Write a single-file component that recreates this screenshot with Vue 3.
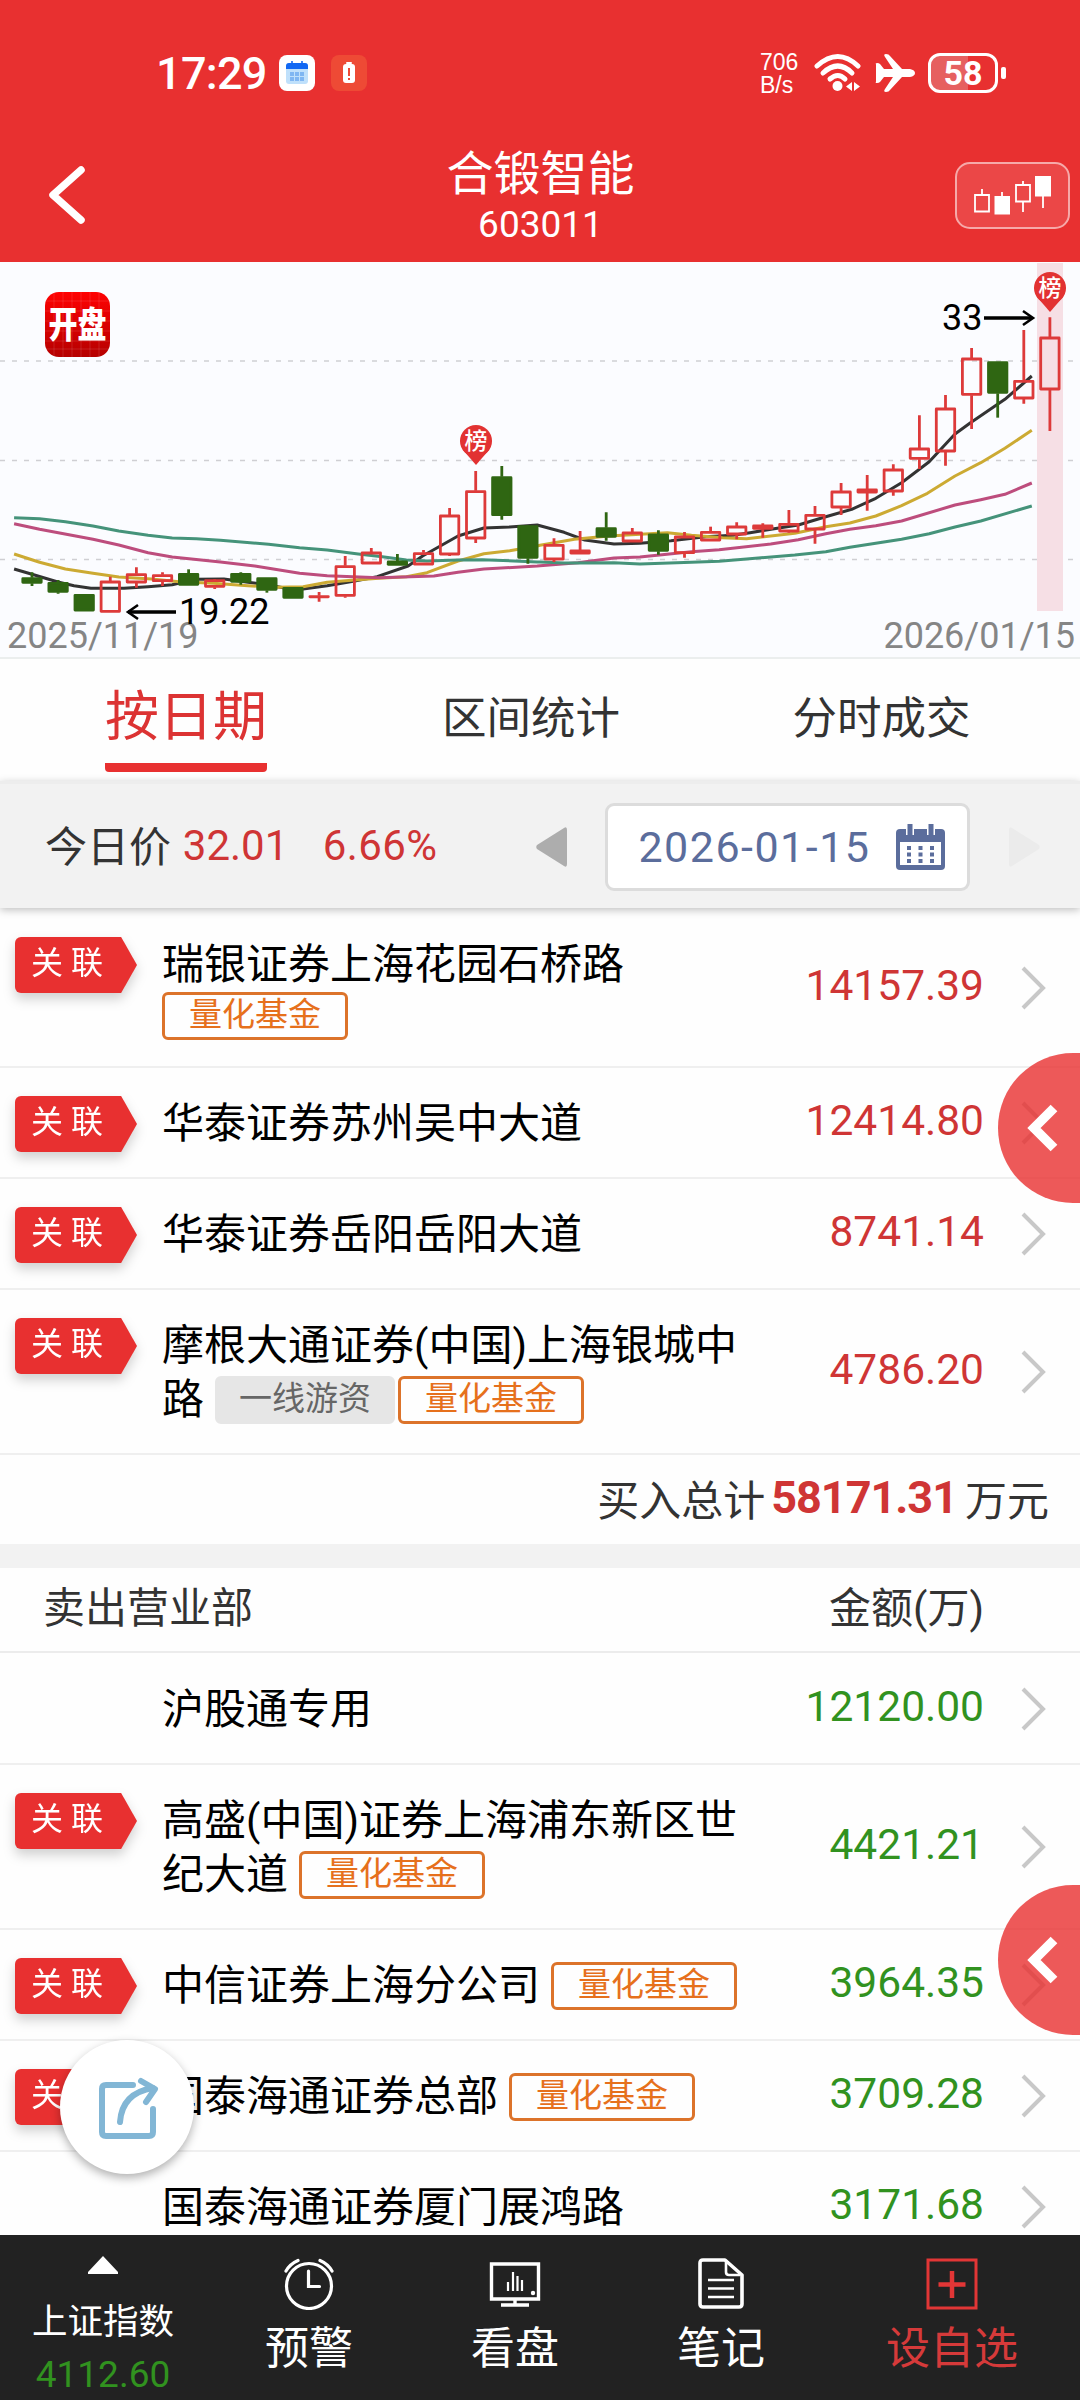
<template>
  <div class="page">
    <header class="header">
      <div class="status-bar">
        <span class="clock">17:29</span>
        <svg class="app-icon" width="36" height="36" viewBox="0 0 36 36">
          <rect width="36" height="36" rx="8" fill="#fff" />
          <rect x="7" y="8" width="22" height="21" rx="3" fill="#bfe0fb" />
          <path d="M7 14v-3a3 3 0 0 1 3-3h16a3 3 0 0 1 3 3v3z" fill="#1268f3" />
          <path d="M13 6v4M23 6v4" stroke="#1268f3" stroke-width="1.6" />
          <path d="M11 17h14v9H11z" fill="#7fb6f2" />
          <path d="M15.5 17v9M20.5 17v9M11 21.5h14" stroke="#bfe0fb" stroke-width="1" />
        </svg>
        <svg class="app-icon" width="36" height="36" viewBox="0 0 36 36">
          <rect width="36" height="36" rx="8" fill="#ee4a35" />
          <rect x="15" y="7" width="6" height="2" rx="1" fill="#fff" />
          <rect x="12" y="9" width="12" height="19" rx="3" fill="#fff" />
          <path d="M18 13v8M18 23v2" stroke="#ee4a35" stroke-width="2" />
        </svg>
        <span class="spacer"></span>
        <span class="speed"><span>706</span><span>B/s</span></span>
        <svg class="wifi" width="48" height="40" viewBox="0 0 48 40">
          <g fill="none" stroke="#fff" stroke-width="5" stroke-linecap="round">
            <path d="M3 13Q24-6 44 13" />
            <path d="M9 20Q24 6 38 20" />
            <path d="M16 26Q24 19 31 26" />
          </g>
          <circle cx="23.5" cy="33" r="5" fill="#fff" />
          <path d="M38 29v9l-6-4.5zM40 29v9l6-4.5z" fill="#fff" />
        </svg>
        <svg class="plane" width="40" height="40" viewBox="0 0 40 40">
          <path d="M1 11.5Q0 10 2 10q2 0 3 1l4 5h9L10 4Q8 1 11 1q3 0 4 2l12 13h8q5 1 5 4t-5 4h-8L15 37q-1 2-4 2-3 0-1-3l8-12H9l-4 5q-1 1-3 1-2 0-1-1.5z" fill="#fff" />
        </svg>
        <div class="battery"><span>58</span></div>
        <i class="battery-nub"></i>
      </div>
      <div class="title-bar">
        <svg class="back" width="42" height="62" viewBox="0 0 42 62">
          <path d="M36 6 8 31l28 25" fill="none" stroke="#fff" stroke-width="7.5" stroke-linecap="round" stroke-linejoin="round" />
        </svg>
        <div class="title">
          <div class="stock-name">合锻智能</div>
          <div class="stock-code">603011</div>
        </div>
        <button class="kline-btn">
          <svg width="78" height="40" viewBox="974 174 78 40">
            <path d="M975 194h14v16.500h-14zM982 188v6M1016 184h14v16.500h-14zM1023 180v4M1023 200v11M1002 191v4M1043 195v12" fill="none" stroke="#fff" stroke-width="1.8" />
            <path d="M994.500 195h15.500v18.500h-15.500zM1035 175h16v20.500h-16z" fill="#fff" />
          </svg>
        </button>
      </div>
    </header>

    <section class="chart">
      <svg width="1080" height="397" viewBox="0 262 1080 397">
        <defs>
          <linearGradient id="logo" x1="0" y1="0" x2="0" y2="1">
            <stop offset="0" stop-color="#ff0202" />
            <stop offset="1" stop-color="#b50000" />
          </linearGradient>
        </defs>
        <path v-for="y in gridLines" :key="y" :d="`M0 ${y}H1080`" stroke="#cfcfd3" stroke-width="1.3" stroke-dasharray="5 7" />
        <rect x="1037" y="263" width="26" height="348" fill="#f6dfe5" />
        <polyline v-for="line in averages" :key="line.color" :points="line.points" :stroke="line.color" fill="none" stroke-width="3" stroke-linejoin="round" />
        <g v-for="(c, i) in candles" :key="i" :stroke="c.color" stroke-width="2.8">
          <path :d="`M${c.x} ${c.high}V${c.top}M${c.x} ${c.bottom}V${c.low}`" />
          <rect :x="c.x - 9.2" :y="c.top + 1" width="18.4" :height="c.height" :fill="c.fill" stroke-linejoin="round" />
        </g>
        <g v-for="pin in pins" :key="pin.x">
          <circle :cx="pin.x" :cy="pin.y" r="16" fill="#e23232" />
          <path :d="`M${pin.x - 13} ${pin.y + 9}L${pin.x} ${pin.y + 24}L${pin.x + 13} ${pin.y + 9}z`" fill="#e23232" />
          <text :x="pin.x" :y="pin.y + 8" class="pin-text">榜</text>
        </g>
        <text x="7" y="648" class="axis-text">2025/11/19</text>
        <text x="1075" y="648" class="axis-text" text-anchor="end">2026/01/15</text>
        <g fill="none" stroke="#000" stroke-width="3.6">
          <path d="M176 612H128M984 318h48" />
          <path d="M138 605l-10 7 10 7M1023 311l10 7-10 7" stroke-width="2.6" />
        </g>
        <text x="179" y="624" class="mark-text">19.22</text>
        <text x="942" y="330" class="mark-text">33</text>
        <rect x="45" y="292" width="65" height="65" rx="14" fill="url(#logo)" />
        <path d="M54 292v65M63 292v65M72 292v65M81 292v65M90 292v65M99 292v65M45 301h65M45 311h65M45 321h65M45 331h65M45 341h65M45 349h65" stroke="#fff" stroke-opacity="0.12" />
        <text transform="translate(77.5 338) scale(1 1.25)" class="logo-text">开盘</text>
      </svg>
    </section>

    <nav class="tabs">
      <div v-for="(tab, i) in tabs" :key="tab" class="tab" :class="{ active: i === activeTab }" @click="activeTab = i">
        <span>{{ tab }}</span>
      </div>
    </nav>

    <section class="date-bar">
      <span class="label">今日价</span>
      <span class="price">32.01</span>
      <span class="change">6.66%</span>
      <svg class="prev" width="31" height="40" viewBox="0 0 31 40"><path d="M31 3v34q0 4-3 2L1 22q-1.500-2 0-4L28 1q3-2 3 2z" fill="#adadad" /></svg>
      <div class="date-box">
        <span>2026-01-15</span>
        <svg width="49" height="46" viewBox="0 0 49 46">
          <path d="M4 5h41q4 0 4 4v33q0 4-4 4H4q-4 0-4-4V9q0-4 4-4z" fill="#5b6d9c" />
          <path d="M4 18h41v23H4z" fill="#fff" />
          <path d="M14 0v11M35 0v11" stroke="#fff" stroke-width="8" />
          <path d="M14 0v11M35 0v11" stroke="#5b6d9c" stroke-width="5" />
          <path d="M11 24h28M11 30.500h28M11 37h28" stroke="#5b6d9c" stroke-width="4" stroke-dasharray="4 7.500" />
        </svg>
      </div>
      <svg class="next" width="31" height="40" viewBox="0 0 31 40"><path d="M0 3v34q0 4 3 2l27-17q1.500-2 0-4L3 1Q0-1 0 3z" fill="#ebebeb" /></svg>
    </section>

    <section class="list buy">
      <div v-for="row in buyRows" :key="row.amount" class="row">
        <div class="link-col"><span v-if="row.linked" class="linked"><b>关 联</b></span></div>
        <div class="name">
          <div v-for="(line, i) in row.lines" :key="i" class="line" :class="{ short: !line.text }">
            <span v-if="line.text" class="text">{{ line.text }}</span>
            <span v-for="tag in line.tags" :key="tag" class="tag" :class="{ gray: tag === '一线游资' }">{{ tag }}</span>
          </div>
        </div>
        <span class="amount">{{ row.amount }}</span>
        <svg class="arrow" width="28" height="46" viewBox="0 0 28 46"><path d="M3 3l20 20L3 43" fill="none" stroke="#c8c8c8" stroke-width="4" /></svg>
      </div>
    </section>

    <div class="total">买入总计<b>58171.31</b>万元</div>
    <div class="list-head"><span>卖出营业部</span><span>金额(万)</span></div>

    <section class="list sell">
      <div v-for="row in sellRows" :key="row.amount" class="row">
        <div class="link-col"><span v-if="row.linked" class="linked"><b>关 联</b></span></div>
        <div class="name">
          <div v-for="(line, i) in row.lines" :key="i" class="line">
            <span class="text">{{ line.text }}</span>
            <span v-for="tag in line.tags" :key="tag" class="tag">{{ tag }}</span>
          </div>
        </div>
        <span class="amount">{{ row.amount }}</span>
        <svg class="arrow" width="28" height="46" viewBox="0 0 28 46"><path d="M3 3l20 20L3 43" fill="none" stroke="#c8c8c8" stroke-width="4" /></svg>
      </div>
    </section>

    <button v-for="side in ['side-top', 'side-bottom']" :key="side" class="side-btn" :class="side">
      <svg width="34" height="50" viewBox="0 0 34 50"><path d="M28 5 8 25l20 20" fill="none" stroke="#fff" stroke-width="9.5" /></svg>
    </button>

    <button class="share-btn">
      <svg width="62" height="66" viewBox="0 0 62 66">
        <g fill="none" stroke="#82b6d5" stroke-width="6" stroke-linecap="round" stroke-linejoin="round">
          <path d="M35 9H8q-4 0-4 4v43q0 4 4 4h43q4 0 4-4V33" />
          <path d="M22 46Q24 17 55 12" />
          <path d="M43 5l14 8-9 13" />
        </g>
      </svg>
    </button>

    <footer class="bottom-nav">
      <div class="index">
        <svg width="30" height="18" viewBox="0 0 30 18"><path d="M15 0l15 16v2H0v-2z" fill="#fff" /></svg>
        <span class="index-name">上证指数</span>
        <span class="index-value">4112.60</span>
      </div>
      <div class="nav-item">
        <svg width="52" height="52" viewBox="0 0 52 52" fill="none" stroke="#fff" stroke-width="3.2" stroke-linecap="round">
          <circle cx="26" cy="28" r="22.5" />
          <path d="M25.500 13v15.500h11M3 13q4-7 12-10.500M49 13q-4-7-12-10.500" />
        </svg>
        <span>预警</span>
      </div>
      <div class="nav-item">
        <svg width="52" height="52" viewBox="0 0 52 52" fill="none" stroke="#fff" stroke-width="3.4">
          <path d="M2.500 6h47v35h-47zM26 41v5M12 47h28" />
          <path d="M19 24v9M24 14v19M28.500 18v15M33 22v11" stroke-width="2.2" />
          <circle cx="44" cy="35" r="2.2" fill="#fff" stroke="none" />
        </svg>
        <span>看盘</span>
      </div>
      <div class="nav-item">
        <svg width="52" height="52" viewBox="0 0 52 52" fill="none" stroke="#fff" stroke-width="3.6" stroke-linejoin="round">
          <path d="M8 2h22l17 15v29q0 3-3 3H8q-3 0-3-3V5q0-3 3-3z" />
          <path d="M31 3v11q0 3 3 3h11M13 22h26M13 30.500h26M13 39h26" stroke-width="2.6" />
        </svg>
        <span>笔记</span>
      </div>
      <div class="nav-item add">
        <svg width="52" height="52" viewBox="0 0 52 52" fill="none" stroke="#e23636">
          <path d="M2 2h48v48H2z" stroke-width="3" />
          <path d="M26 13v27M12.500 26.500h27" stroke-width="4.5" />
        </svg>
        <span>设自选</span>
      </div>
    </footer>
  </div>
</template>

<script setup>
import { ref } from 'vue'

const tabs = ['按日期', '区间统计', '分时成交']
const activeTab = ref(0)

const gridLines = [361, 460.5, 559.5]
const pins = [
  { x: 476, y: 441 },
  { x: 1050, y: 288 }
]

// direction, high, body top, body bottom, low (thirds of a pixel below the chart origin)
const rawCandles = [
  ['g', 937, 953, 970, 978], ['g', 960, 967, 997, 1001], ['g', 1003, 1003, 1053, 1053], ['r', 950, 963, 1057, 1057],
  ['r', 922, 941, 969, 983], ['r', 937, 944, 965, 978], ['g', 928, 940, 976, 976], ['r', 957, 959, 982, 987],
  ['g', 937, 940, 967, 974], ['g', 953, 953, 991, 998], ['g', 982, 982, 1015, 1015], ['r', 996, 1007, 1009, 1025],
  ['r', 888, 917, 1009, 1013], ['r', 864, 876, 912, 912], ['g', 882, 903, 916, 916], ['r', 870, 878, 915, 915],
  ['r', 744, 765, 885, 888], ['r', 633, 692, 837, 849], ['g', 618, 650, 767, 779], ['g', 795, 797, 895, 911],
  ['r', 835, 853, 900, 906], ['r', 813, 870, 882, 882], ['g', 757, 803, 832, 842], ['r', 804, 816, 846, 846],
  ['g', 811, 822, 874, 884], ['r', 816, 828, 881, 893], ['r', 800, 814, 843, 843], ['r', 787, 798, 825, 838],
  ['r', 790, 795, 808, 833], ['r', 750, 790, 816, 818], ['r', 738, 763, 810, 851], ['r', 669, 693, 744, 765],
  ['r', 645, 687, 699, 752], ['r', 613, 627, 696, 707], ['r', 466, 564, 598, 627], ['r', 405, 444, 576, 617],
  ['r', 264, 294, 406, 507], ['g', 305, 305, 400, 473], ['r', 210, 361, 417, 431], ['r', 172, 231, 390, 513]
]

const toY = (v) => 260 + v / 3

const candles = rawCandles.map(([dir, high, top, bottom, low], i) => {
  const color = dir === 'g' ? '#2f6612' : '#dd3a3a'
  const flat = bottom - top < 16
  return {
    x: 32 + i * 26.1,
    high: toY(high),
    top: toY(top),
    bottom: toY(bottom),
    low: toY(low),
    height: Math.max(0.2, (bottom - top) / 3 - 2),
    color,
    fill: dir === 'g' || flat ? color : 'none'
  }
})

// The chart is sampled in two halves, each in its own local units
const trace = (left, right) =>
  [
    ...left.map(([x, y]) => [x / 2.9037, toY(y)]),
    ...right.map(([x, y]) => [540 + x / 2.9037, toY(y)])
  ].map(([x, y]) => `${x.toFixed(1)},${y.toFixed(1)}`).join(' ')

const averages = [
  {
    color: '#333333',
    points: trace(
      [[41, 927], [93, 943], [168, 966], [215, 977], [264, 985], [360, 985], [430, 980], [500, 974], [570, 958], [650, 957], [720, 967], [780, 975], [830, 985], [880, 987], [950, 977], [1030, 963], [1095, 950], [1185, 918], [1227, 888], [1330, 828], [1405, 804], [1480, 801], [1560, 795]],
      [[0, 797], [70, 817], [130, 840], [215, 852], [290, 850], [380, 842], [480, 830], [560, 826], [610, 818], [680, 806], [750, 795], [830, 770], [905, 748], [975, 715], [1050, 668], [1130, 605], [1205, 522], [1250, 488], [1350, 418], [1428, 348]]
    )
  },
  {
    color: '#ccaa33',
    points: trace(
      [[41, 882], [115, 907], [190, 927], [270, 940], [345, 951], [440, 957], [520, 965], [620, 970], [720, 977], [800, 982], [880, 980], [950, 967], [1030, 960], [1100, 955], [1180, 950], [1240, 938], [1330, 903], [1405, 881], [1480, 872], [1560, 858]],
      [[0, 856], [100, 838], [200, 828], [370, 818], [440, 826], [530, 833], [600, 836], [740, 820], [830, 800], [900, 789], [975, 768], [1050, 737], [1125, 700], [1205, 648], [1280, 608], [1350, 565], [1428, 511]]
    )
  },
  {
    color: '#bd4d7d',
    points: trace(
      [[41, 791], [115, 808], [270, 838], [345, 855], [430, 878], [500, 891], [640, 906], [740, 918], [870, 940], [950, 947], [1100, 953], [1260, 948], [1330, 937], [1405, 927], [1560, 918]],
      [[0, 917], [110, 908], [215, 894], [290, 891], [440, 875], [520, 869], [670, 852], [750, 839], [830, 821], [900, 808], [975, 797], [1050, 783], [1205, 735], [1280, 719], [1350, 703], [1428, 669]]
    )
  },
  {
    color: '#45937a',
    points: trace(
      [[41, 773], [115, 776], [190, 785], [270, 798], [345, 813], [430, 826], [500, 834], [570, 836], [640, 841], [780, 853], [870, 863], [950, 870], [1040, 882], [1110, 890], [1180, 900], [1240, 903], [1330, 900], [1400, 899], [1560, 906]],
      [[0, 906], [70, 909], [215, 908], [290, 912], [440, 907], [520, 904], [600, 897], [740, 885], [830, 875], [900, 862], [1050, 838], [1130, 821], [1205, 801], [1280, 783], [1428, 738]]
    )
  }
]

const buyRows = [
  { linked: true, amount: '14157.39', lines: [{ text: '瑞银证券上海花园石桥路' }, { tags: ['量化基金'] }] },
  { linked: true, amount: '12414.80', lines: [{ text: '华泰证券苏州吴中大道' }] },
  { linked: true, amount: '8741.14', lines: [{ text: '华泰证券岳阳岳阳大道' }] },
  { linked: true, amount: '4786.20', lines: [{ text: '摩根大通证券(中国)上海银城中' }, { text: '路', tags: ['一线游资', '量化基金'] }] }
]

const sellRows = [
  { linked: false, amount: '12120.00', lines: [{ text: '沪股通专用' }] },
  { linked: true, amount: '4421.21', lines: [{ text: '高盛(中国)证券上海浦东新区世' }, { text: '纪大道', tags: ['量化基金'] }] },
  { linked: true, amount: '3964.35', lines: [{ text: '中信证券上海分公司', tags: ['量化基金'] }] },
  { linked: true, amount: '3709.28', lines: [{ text: '国泰海通证券总部', tags: ['量化基金'] }] },
  { linked: false, amount: '3171.68', lines: [{ text: '国泰海通证券厦门展鸿路' }] }
]
</script>

<style>
body {
  margin: 0;
  background: #fff;
}
</style>

<style scoped>
.page {
  position: relative;
  width: 1080px;
  height: 2400px;
  overflow: hidden;
  background: #fefefe;
  color: #333;
  font-family: Roboto, 'Noto Sans CJK SC', sans-serif;
  font-size: 42px;
}

.page * {
  box-sizing: border-box;
}

svg {
  display: block;
  flex: none;
}

button {
  border: 0;
  padding: 0;
}

/* Header */
.header {
  height: 262px;
  background: #e83030;
  color: #fff;
}

.status-bar {
  display: flex;
  align-items: center;
  height: 146px;
  padding: 0 74px 0 156px;
}

.clock {
  width: 123px;
  margin-top: 1px;
  font-size: 45px;
  font-weight: 500;
  letter-spacing: -0.7px;
}

.app-icon {
  margin-right: 16px;
}

.spacer {
  flex: 1;
}

.speed {
  display: flex;
  flex-direction: column;
  width: 54px;
  padding-top: 2px;
  font-family: 'Liberation Sans', sans-serif;
  font-size: 23px;
  line-height: 23px;
}

.wifi {
  margin-right: 13px;
}

.plane {
  margin-right: 13px;
}

.battery {
  width: 70px;
  height: 40px;
  border: 3px solid #fff;
  border-radius: 12px;
  background: linear-gradient(90deg, #e66060 58%, transparent 58%);
  font-size: 34px;
  font-weight: 700;
  line-height: 35px;
  text-align: center;
}

.battery-nub {
  width: 5px;
  height: 12px;
  margin-left: 3px;
  border-radius: 2px;
  background: #fff;
}

.title-bar {
  display: flex;
  justify-content: space-between;
  align-items: center;
  height: 98px;
  padding: 0 10px 0 45px;
}

.title {
  margin-left: 39px;
  padding-top: 6px;
  text-align: center;
}

.stock-name {
  font-size: 47px;
  line-height: 54px;
}

.stock-code {
  font-size: 37px;
  line-height: 48px;
}

.kline-btn {
  display: flex;
  align-items: center;
  justify-content: center;
  width: 115px;
  height: 67px;
  padding-left: 0;
  border: 2px solid #f6a9a9;
  border-radius: 15px;
  background: #eb4747;
}

/* Chart */
.chart {
  height: 397px;
  background: #fbfcff;
  border-bottom: 2px solid #ebeeee;
}

.axis-text {
  font-size: 36px;
  fill: #858585;
}

.mark-text {
  font-size: 36px;
  fill: #000;
}

.pin-text {
  font-size: 23px;
  font-weight: 500;
  fill: #fff;
  text-anchor: middle;
}

.logo-text {
  font-size: 29px;
  font-weight: 900;
  fill: #fff;
  text-anchor: middle;
}

/* Tabs */
.tabs {
  display: grid;
  grid-template-columns: 346px 344px 1fr;
  height: 122px;
  padding: 0 20px 0 13px;
}

.tab {
  display: flex;
  justify-content: center;
  font-size: 44.5px;
  line-height: 121px;
}

.tab.active {
  color: #dc3333;
  font-size: 54px;
  line-height: 118px;
}

.tab.active span {
  height: 113px;
  border-bottom: 9px solid #e83030;
  border-radius: 4px;
}

/* Date bar */
.date-bar {
  position: relative;
  display: flex;
  align-items: center;
  height: 127px;
  padding: 2px 40px 0 45px;
  background: #f2f2f2;
  border-top: 3px solid #ededed;
  box-shadow: 0 2px 8px rgba(0, 0, 0, 0.25);
}

.label {
  width: 138px;
  margin-bottom: 7px;
}

.price,
.change {
  width: 140px;
  margin-bottom: 4px;
  color: #cf3535;
}

.change {
  width: 214px;
  letter-spacing: 0.4px;
}

.date-box {
  display: flex;
  align-items: center;
  justify-content: space-between;
  width: 365px;
  height: 88px;
  margin: 0 39px 0 38px;
  padding: 0 22px 0 30px;
  border: 3px solid #dcdcdc;
  border-radius: 9px;
  background: #fff;
  color: #5b6d9c;
  font-size: 43px;
  letter-spacing: 1.5px;
}

/* Lists */
.row {
  display: flex;
  align-items: center;
  padding-right: 32px;
  border-bottom: 2px solid #efefef;
}

.link-col {
  align-self: flex-start;
  width: 162px;
  padding: 28px 0 0 15px;
}

.linked {
  display: block;
  width: 122px;
  filter: drop-shadow(0 6px 6px rgba(0, 0, 0, 0.18));
}

.linked b {
  display: block;
  height: 56px;
  padding-left: 16px;
  border-radius: 6px;
  background: #e83030;
  clip-path: polygon(0 0, 87% 0, 100% 50%, 87% 100%, 0 100%);
  color: #fff;
  font-size: 32px;
  font-weight: 400;
  line-height: 53px;
  white-space: nowrap;
}

.name {
  flex: 1;
  padding: 28px 0 26px;
  color: #000;
}

.line {
  display: flex;
  align-items: center;
  height: 55px;
  line-height: 53px;
  white-space: nowrap;
}

.line + .line {
  height: 54px;
}

.line.short {
  height: 48px;
}

.text {
  margin-bottom: 1px;
}

.text + .tag {
  margin-left: 11px;
}

.tag {
  width: 186px;
  height: 48px;
  border: 3px solid #dc732a;
  border-radius: 6px;
  color: #e6701c;
  font-size: 33px;
  line-height: 40px;
  text-align: center;
}

.tag.gray {
  width: 180px;
  margin-right: 3px;
  border-color: #e6e6e6;
  background: #e6e6e6;
  color: #666;
}

.amount {
  margin: 0 36px 4px 0;
  color: #cf3535;
  font-size: 42.5px;
}

.buy .row:first-child,
.sell .row:first-child {
  padding-top: 1px;
}

.sell .amount {
  color: #31921f;
}

.total {
  display: flex;
  align-items: center;
  justify-content: flex-end;
  height: 89px;
  padding: 0 31px 5px 0;
}

.total b {
  margin: 0 8px 0 6px;
  color: #cf3535;
  font-size: 45px;
  letter-spacing: -1px;
}

.list-head {
  display: flex;
  align-items: center;
  justify-content: space-between;
  height: 109px;
  padding: 0 96px 10px 43px;
  border-top: 24px solid #f2f2f2;
  border-bottom: 2px solid #ececec;
}

/* Floating controls */
.side-btn {
  position: absolute;
  right: 0;
  display: flex;
  align-items: center;
  width: 82px;
  height: 150px;
  padding-left: 28px;
  border-radius: 75px 0 0 75px;
  background: rgba(232, 48, 48, 0.8);
}

.side-top {
  top: 1053px;
}

.side-bottom {
  top: 1885px;
}

.share-btn {
  position: absolute;
  left: 60px;
  top: 2040px;
  display: flex;
  align-items: center;
  justify-content: center;
  width: 134px;
  height: 134px;
  padding: 3px 0 0 3px;
  border-radius: 50%;
  background: #fff;
  box-shadow: 0 4px 10px rgba(0, 0, 0, 0.3);
}

/* Bottom navigation */
.bottom-nav {
  position: absolute;
  left: 0;
  bottom: 0;
  display: grid;
  grid-template-columns: repeat(4, 206px) 256px;
  width: 1080px;
  height: 165px;
  background: #222;
  color: #fff;
}

.index,
.nav-item {
  display: flex;
  flex-direction: column;
  align-items: center;
}

.index {
  padding-top: 21px;
}

.index-name {
  margin-top: 22px;
  font-size: 35.5px;
  line-height: 52px;
}

.index-value {
  margin-top: 5px;
  color: #31921f;
  font-size: 37px;
  line-height: 44px;
}

.nav-item {
  padding-top: 23px;
  font-size: 44px;
  line-height: 66px;
}

.nav-item span {
  margin-top: 6px;
}

.nav-item.add {
  color: #d63a3a;
}
</style>
